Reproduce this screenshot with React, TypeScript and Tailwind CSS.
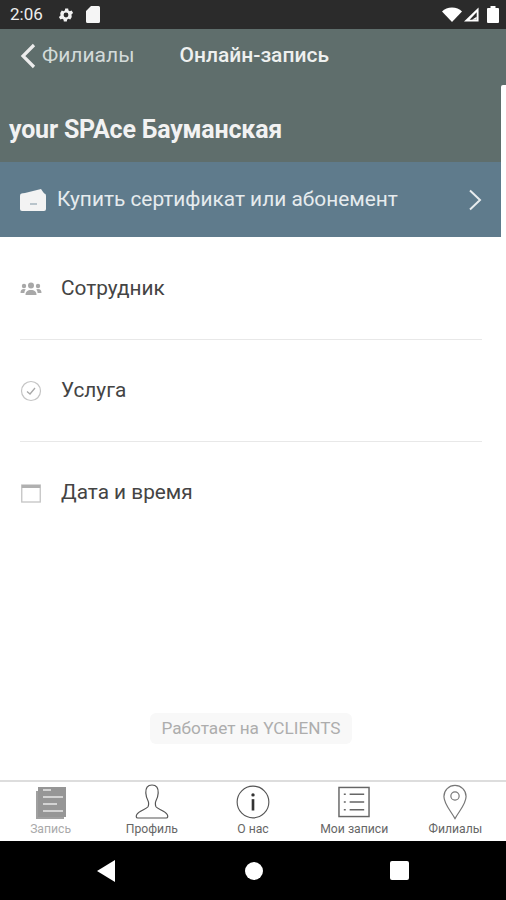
import React from "react";

const font = { fontFamily: "Roboto, sans-serif" };

const rows = [
  { label: "Сотрудник", icon: <PeopleIcon /> },
  { label: "Услуга", icon: <CheckIcon /> },
  { label: "Дата и время", icon: <CalendarIcon /> },
];

function PeopleIcon() {
  return (
    <svg width="22" height="16" viewBox="0 0 22 16" fill="#a8a8a8">
      <circle cx="11" cy="4.5" r="3" />
      <path d="M5.5 14c0-3.5 2-5 5.500-5s5.500 1.500 5.500 5z" />
      <circle cx="4" cy="5" r="2.200" />
      <path d="M0.500 12c0-2.500 1-4 3.500-4 .8 0 1.300.2 1.800.5-1 1-1.300 2.100-1.400 3.500z" />
      <circle cx="18" cy="5" r="2.200" />
      <path d="M21.500 12c0-2.500-1-4-3.500-4-.8 0-1.300.2-1.800.5 1 1 1.300 2.100 1.400 3.500z" />
    </svg>
  );
}

function CheckIcon() {
  return (
    <svg width="22" height="22" viewBox="0 0 22 22" fill="none" stroke="#c4c4c4">
      <circle cx="11" cy="11" r="9.500" strokeWidth="1.200" />
      <path d="M7 11.500l3 2.500 5-6" strokeWidth="1.300" stroke="#a8a8a8" />
    </svg>
  );
}

function CalendarIcon() {
  return (
    <svg width="20" height="19" viewBox="0 0 20 19" fill="none">
      <rect x="0.750" y="1" width="18.500" height="17" stroke="#c4c4c4" strokeWidth="1.300" />
      <rect x="0.750" y="1" width="18.500" height="3" fill="#b0b0b0" />
    </svg>
  );
}

function Tab({ label, children, color = "text-[#666]" }: { label: string; children: React.ReactNode; color?: string }) {
  return (
    <div className="flex flex-1 flex-col items-center">
      <div className="flex h-[38px] items-center justify-center">{children}</div>
      <span className={`mt-[1px] text-[12.200px] leading-[14px] ${color}`}>{label}</span>
    </div>
  );
}

export default function App() {
  return (
    <div className="relative flex h-[900px] w-[506px] flex-col overflow-hidden bg-white" style={font}>
      {/* status bar */}
      <div className="flex h-[29px] items-center justify-between bg-[#2b2b2b] pl-[10px] pr-[7px] text-white">
        <div className="flex items-center">
          <span className="text-[17px] text-[#eeeeee]">2:06</span>
          <svg className="ml-[14px]" width="18" height="18" viewBox="0 0 24 24" fill="#f2f2f2">
            <path d="M19.400 13a7.500 7.500 0 0 0 0-2l2.100-1.600-2-3.500-2.500 1a7.500 7.500 0 0 0-1.700-1l-.4-2.600h-4l-.4 2.600a7.500 7.500 0 0 0-1.700 1l-2.500-1-2 3.500L4.600 11a7.500 7.500 0 0 0 0 2l-2.100 1.600 2 3.500 2.500-1a7.500 7.500 0 0 0 1.700 1l.4 2.600h4l.4-2.600a7.500 7.500 0 0 0 1.700-1l2.500 1 2-3.500zM12 15.200a3.200 3.200 0 1 1 0-6.400 3.200 3.200 0 0 1 0 6.400z" />
          </svg>
          <svg className="ml-[11px]" width="14" height="17" viewBox="0 0 14 17" fill="#f5f5f5">
            <path d="M5 0h7.500A1.500 1.500 0 0 1 14 1.500v14a1.500 1.500 0 0 1-1.500 1.500h-11A1.500 1.500 0 0 1 0 15.500V5z" />
          </svg>
        </div>
        <div className="flex items-center gap-[2px]">
          <svg width="20" height="15" viewBox="0 0 20 15" fill="#ffffff">
            <path d="M0 4.500C2.500 2 6 .5 10 .5s7.500 1.500 10 4L10 15z" />
          </svg>
          <svg width="15" height="15" viewBox="0 0 16 15">
            <path d="M15.500 0v15H0z" fill="#ffffff" />
            <path d="M13.500 5v8H6z" fill="#2b2b2b" />
            <path d="M13.500 10v3H8.500z" fill="#ffffff" />
          </svg>
          <svg className="ml-[6px]" width="12" height="17" viewBox="0 0 12 17" fill="#ffffff">
            <path d="M3.500 0h5v2H11a1 1 0 0 1 1 1v13a1 1 0 0 1-1 1H1a1 1 0 0 1-1-1V3a1 1 0 0 1 1-1h2.500z" />
          </svg>
        </div>
      </div>

      {/* header */}
      <div className="flex h-[133px] flex-col bg-[#5f6e6c]">
        <div className="flex h-[53px] items-center pl-[20px]">
          <svg width="16" height="26" viewBox="0 0 16 26" fill="none" stroke="#ececec" strokeWidth="3.200">
            <path d="M14 2L3 13l11 11" />
          </svg>
          <span className="ml-[6px] text-[21px] text-[#d3dad9]">Филиалы</span>
          <span className="ml-[45px] text-[21px] font-medium text-[#eef0ef]">Онлайн-запись</span>
        </div>
        <div className="mt-[34px] pl-[9px] text-[25px] font-bold leading-[27px] tracking-[-0.2px] text-[#f2f2f2]">
          your SPAce Бауманская
        </div>
      </div>

      {/* banner */}
      <div className="flex h-[75px] items-center bg-[#5f7b8c] pl-[19px] pr-[24px]">
        <svg width="28" height="23" viewBox="0 0 28 23" fill="#f3f3f3">
          <path d="M2 6L22 1l3.500 5z" />
          <rect x="1" y="5.500" width="26" height="17.500" rx="2" />
          <rect x="11" y="15" width="7" height="2" fill="#b9c4cb" />
        </svg>
        <span className="ml-[10px] flex-1 text-[20.850px] text-[#e6ebee]">Купить сертификат или абонемент</span>
        <svg width="14" height="22" viewBox="0 0 14 22" fill="none" stroke="#e8ecee" strokeWidth="2">
          <path d="M2 1.500L12 11 2 20.500" />
        </svg>
      </div>

      {/* rows */}
      <div className="flex flex-1 flex-col pl-[20px] pr-[24px] pt-[1px]">
        {rows.map((r, i) => (
          <div key={r.label} className={`flex h-[102px] items-center ${i < 2 ? "border-b border-[#e8e8e8]" : ""}`}>
            <div className="flex w-[22px] justify-center">{r.icon}</div>
            <span className="ml-[19px] text-[20.800px] text-[#444444]">{r.label}</span>
          </div>
        ))}
        <div className="mt-auto mb-[36px] flex justify-center">
          <div className="flex h-[31px] w-[202px] items-center justify-center rounded-[6px] bg-[#f8f8f8] text-[17.200px] text-[#adadad]">
            Работает на YCLIENTS
          </div>
        </div>
      </div>

      {/* tab bar */}
      <div className="flex h-[61px] border-t-2 border-[#dddddd] bg-white pt-[1px]">
        <Tab label="Запись" color="text-[#aaaaaa]">
          <svg width="33" height="33" viewBox="0 0 33 33">
            <path d="M3 5v27h27" fill="none" stroke="#a0a0a0" strokeWidth="2" />
            <rect x="4" y="1" width="28" height="30" fill="#969696" />
            <path d="M9 4h8M9 11h20M9 18h14M9 25h20" stroke="#e8e8e8" strokeWidth="1.500" />
          </svg>
        </Tab>
        <Tab label="Профиль">
          <svg width="34" height="36" viewBox="0 0 34 36" fill="none" stroke="#555555" strokeWidth="1.200">
            <path d="M17 1c-4.500 0-6.500 3-6.200 8 .2 3.500 1.200 6 2.300 8 .7 1.300.8 4.500-.3 6-2 2.500-8.500 3.500-11 7.500-.9 1.500-.8 3.500 1 3.500h28.400c1.800 0 1.900-2 1-3.500-2.500-4-9-5-11-7.500-1.100-1.500-1-4.700-.3-6 1.100-2 2.100-4.500 2.300-8 .3-5-1.700-8-6.200-8z" />
          </svg>
        </Tab>
        <Tab label="О нас">
          <svg width="34" height="34" viewBox="0 0 36 36" fill="none">
            <circle cx="18" cy="18" r="16.800" stroke="#555555" strokeWidth="1.200" />
            <rect x="16.600" y="15" width="2.800" height="12" fill="#333333" />
            <circle cx="18" cy="10.500" r="1.800" fill="#333333" />
          </svg>
        </Tab>
        <Tab label="Мои записи">
          <svg width="32" height="32" viewBox="0 0 33 32" fill="none" stroke="#666666">
            <rect x="1" y="1" width="31" height="30" strokeWidth="1.500" />
            <path d="M6 8h2M12 8h15M6 16h2M12 16h15M6 24h2M12 24h15" strokeWidth="1.500" />
          </svg>
        </Tab>
        <Tab label="Филиалы">
          <svg width="24" height="38" viewBox="0 0 26 38" fill="none" stroke="#777777" strokeWidth="1.300">
            <path d="M13 37C8 28 1 21 1 13a12 12 0 0 1 24 0c0 8-7 15-12 24z" />
            <circle cx="13" cy="12.500" r="4.500" />
          </svg>
        </Tab>
      </div>

      {/* android nav */}
      <div className="flex h-[59px] items-center bg-black">
        <svg className="ml-[97px]" width="18" height="22" viewBox="0 0 18 22" fill="#ffffff">
          <path d="M18 0v22L0 11z" />
        </svg>
        <div className="ml-[130px] h-[18px] w-[18px] rounded-full bg-white" />
        <div className="ml-[127px] h-[19px] w-[19px] rounded-[2px] bg-white" />
      </div>

      {/* white strip on the right edge */}
      <div className="absolute bottom-[120px] right-0 top-[85px] w-[5px] rounded-tl-[2px] bg-white" />
    </div>
  );
}
